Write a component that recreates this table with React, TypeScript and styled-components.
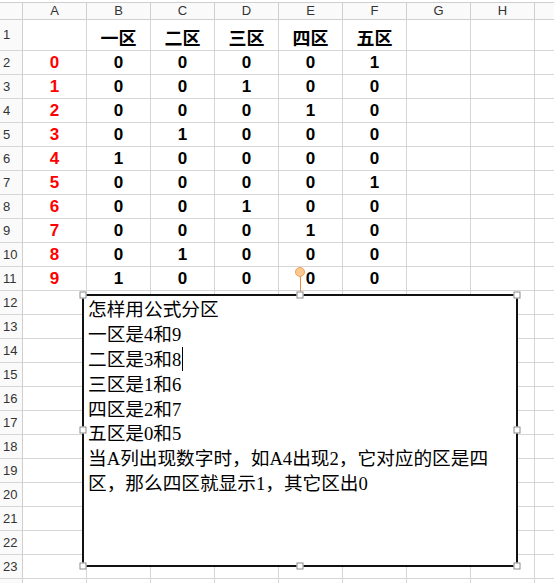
import React from "react";
import styled, { createGlobalStyle } from "styled-components";

const GlobalStyle = createGlobalStyle`
  html, body {
    margin: 0;
    padding: 0;
    background: #ffffff;
    overflow: hidden;
  }
`;

const Sheet = styled.div`
  position: relative;
  width: 554px;
  height: 583px;
  padding-top: 2px;
  box-sizing: border-box;
  overflow: hidden;
  background: #ffffff;
`;

const Grid = styled.div`
  display: grid;
  grid-template-columns: 23px repeat(9, 64px);
  grid-template-rows: 17px 31px repeat(23, 24px);
  border-top: 1px solid #cfcfcf;
  width: max-content;
`;

const Corner = styled.div`
  box-sizing: border-box;
  border-right: 1px solid #cfcfcf;
  border-bottom: 1px solid #cfcfcf;
  background: #fafafa;
`;

const ColHeader = styled.div`
  box-sizing: border-box;
  border-right: 1px solid #cfcfcf;
  border-bottom: 1px solid #cfcfcf;
  background: #fafafa;
  display: flex;
  align-items: center;
  justify-content: center;
  font-family: "Liberation Sans", Arial, sans-serif;
  font-size: 13px;
  line-height: 16px;
  color: #333333;
`;

const RowHeader = styled.div`
  box-sizing: border-box;
  border-right: 1px solid #cfcfcf;
  border-bottom: 1px solid #d6d6d6;
  background: #fafafa;
  display: flex;
  align-items: center;
  padding-left: 3px;
  font-family: "Liberation Sans", Arial, sans-serif;
  font-size: 13px;
  line-height: 16px;
  color: #333333;
`;

const DataCell = styled.div<{ $red?: boolean }>`
  box-sizing: border-box;
  border-right: 1px solid #d6d6d6;
  border-bottom: 1px solid #d6d6d6;
  display: flex;
  align-items: flex-end;
  justify-content: center;
  padding-bottom: 1px;
  font-family: "Liberation Sans", Arial, sans-serif;
  font-weight: 700;
  font-size: 17px;
  line-height: 20px;
  color: ${(p) => (p.$red ? "#ff0000" : "#000000")};
`;

const TitleCell = styled(DataCell)`
  font-family: "Noto Sans CJK SC", sans-serif;
  font-size: 18px;
  line-height: 22px;
  padding-bottom: 2px;
`;

const TextBox = styled.div`
  position: absolute;
  left: 82px;
  top: 294px;
  width: 436px;
  height: 273px;
  box-sizing: border-box;
  border: 2px solid #111111;
  background: #ffffff;
  padding: 2px 4px;
  font-family: "Liberation Serif", "Noto Sans CJK SC", serif;
  font-size: 18.67px;
  line-height: 24.67px;
  color: #000000;
`;

const TextLine = styled.div`
  white-space: nowrap;
`;

const Caret = styled.span`
  display: inline-block;
  width: 1px;
  height: 24px;
  margin-left: 1px;
  vertical-align: -5px;
  background: #000000;
`;

const Handle = styled.div`
  position: absolute;
  width: 7px;
  height: 7px;
  box-sizing: border-box;
  border: 1px solid #8c8c8c;
  background: #ffffff;
  transform: translate(-50%, -50%);
`;

const RotateStem = styled.div`
  position: absolute;
  left: 300px;
  top: 276px;
  width: 1px;
  height: 16px;
  background: #ee8a3c;
`;

const RotateKnob = styled.div`
  position: absolute;
  left: 295px;
  top: 267px;
  width: 10px;
  height: 10px;
  box-sizing: border-box;
  border-radius: 50%;
  border: 1px solid #f0a05a;
  background: #fcc890;
`;

const columns = ["A", "B", "C", "D", "E", "F", "G", "H", ""];
const titles = ["一区", "二区", "三区", "四区", "五区"];
const data: number[][] = [
  [0, 0, 0, 0, 1],
  [0, 0, 1, 0, 0],
  [0, 0, 0, 1, 0],
  [0, 1, 0, 0, 0],
  [1, 0, 0, 0, 0],
  [0, 0, 0, 0, 1],
  [0, 0, 1, 0, 0],
  [0, 0, 0, 1, 0],
  [0, 1, 0, 0, 0],
  [1, 0, 0, 0, 0],
];

const handles: [number, number][] = [
  [83, 295],
  [300, 295],
  [517, 295],
  [83, 430],
  [517, 430],
  [83, 566],
  [300, 566],
  [517, 566],
];

export default function App() {
  const rows: React.ReactNode[] = [];
  rows.push(<RowHeader key="r1">1</RowHeader>);
  rows.push(<DataCell key="r1a" />);
  titles.forEach((t, i) => rows.push(<TitleCell key={`r1t${i}`}>{t}</TitleCell>));
  for (let i = 0; i < 3; i++) rows.push(<DataCell key={`r1e${i}`} />);
  data.forEach((vals, r) => {
    rows.push(<RowHeader key={`h${r}`}>{r + 2}</RowHeader>);
    rows.push(
      <DataCell key={`a${r}`} $red>
        {r}
      </DataCell>
    );
    vals.forEach((v, c) => rows.push(<DataCell key={`v${r}-${c}`}>{v}</DataCell>));
    for (let i = 0; i < 3; i++) rows.push(<DataCell key={`e${r}-${i}`} />);
  });
  for (let r = 12; r <= 24; r++) {
    rows.push(<RowHeader key={`h${r}`}>{r <= 23 ? r : ""}</RowHeader>);
    for (let c = 0; c < 9; c++) rows.push(<DataCell key={`b${r}-${c}`} />);
  }

  return (
    <>
      <GlobalStyle />
      <Sheet>
        <Grid>
          <Corner />
          {columns.map((c, i) => (
            <ColHeader key={i}>{c}</ColHeader>
          ))}
          {rows}
        </Grid>
        <TextBox>
          <TextLine>怎样用公式分区</TextLine>
          <TextLine>一区是4和9</TextLine>
          <TextLine>
            二区是3和8
            <Caret />
          </TextLine>
          <TextLine>三区是1和6</TextLine>
          <TextLine>四区是2和7</TextLine>
          <TextLine>五区是0和5</TextLine>
          <TextLine>当A列出现数字时，如A4出现2，它对应的区是四</TextLine>
          <TextLine>区，那么四区就显示1，其它区出0</TextLine>
        </TextBox>
        <RotateStem />
        <RotateKnob />
        {handles.map(([x, y], i) => (
          <Handle key={i} style={{ left: x, top: y }} />
        ))}
      </Sheet>
    </>
  );
}
